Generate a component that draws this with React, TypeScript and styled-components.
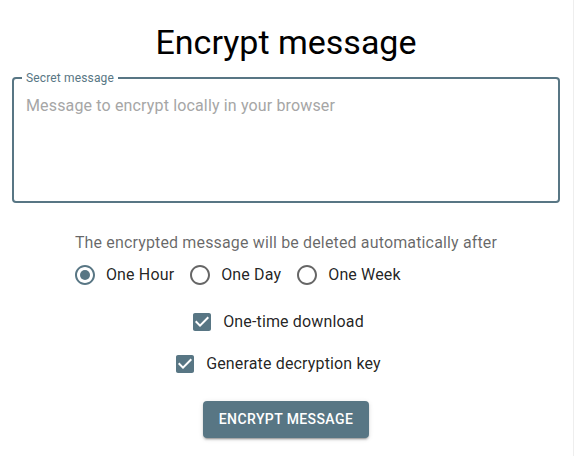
import React from "react";
import styled, { createGlobalStyle } from "styled-components";

const PRIMARY = "#587684";

const GlobalStyle = createGlobalStyle`
  html, body {
    margin: 0;
    padding: 0;
    background: #ffffff;
  }
  body {
    font-family: Roboto, "Liberation Sans", Arial, sans-serif;
    color: rgba(0, 0, 0, 0.87);
  }
  * { box-sizing: border-box; }
`;

const Page = styled.div`
  width: 574px;
  min-height: 456px;
  border-right: 1px solid #eeeeee;
  padding: 0 13px 0 12px;
`;

const Form = styled.form`
  display: flex;
  flex-direction: column;
  align-items: center;
`;

const Title = styled.h1`
  margin: 0;
  padding-top: 21px;
  font-family: Roboto, "Liberation Sans", Arial, sans-serif;
  font-size: 34px;
  font-weight: 400;
  line-height: 42px;
  color: #000000;
`;

const Outline = styled.fieldset`
  align-self: stretch;
  margin: 9px 0 0;
  padding: 0;
  min-inline-size: 0;
  border: 2px solid ${PRIMARY};
  border-radius: 4px;
  display: flex;
  flex-direction: column;
`;

const Legend = styled.legend`
  margin-left: 8px;
  padding: 0 4px;
  font-size: 12px;
  line-height: 12px;
  letter-spacing: 0.15px;
  color: ${PRIMARY};
`;

const TextArea = styled.textarea`
  display: block;
  width: 100%;
  border: none;
  outline: none;
  resize: none;
  background: transparent;
  padding: 9.5px 12px 10.5px;
  font-family: Roboto, "Liberation Sans", Arial, sans-serif;
  font-size: 16px;
  line-height: 23px;
  letter-spacing: 0.15px;
  height: 117px;
  color: rgba(0, 0, 0, 0.87);
  caret-color: #000;
  &::placeholder {
    color: #a6a6a6;
    opacity: 1;
  }
`;

const Control = styled.div`
  margin-top: 28px;
  display: inline-flex;
  flex-direction: column;
`;

const Helper = styled.div`
  font-size: 16px;
  line-height: 23px;
  letter-spacing: 0.15px;
  color: rgba(0, 0, 0, 0.6);
`;

const RadioRow = styled.div`
  display: flex;
  flex-direction: row;
`;

const ChoiceLabel = styled.label<{ $top?: number }>`
  display: inline-flex;
  align-items: center;
  margin: ${(p) => p.$top ?? 0}px 16px 0 -11px;
  cursor: pointer;
  font-size: 16px;
  line-height: 24px;
  letter-spacing: 0.15px;
  color: rgba(0, 0, 0, 0.87);
`;

const IconBox = styled.span<{ $on: boolean }>`
  display: inline-flex;
  padding: 9px;
  color: ${(p) => (p.$on ? PRIMARY : "rgba(0,0,0,0.6)")};
  svg { width: 24px; height: 24px; display: block; fill: currentColor; }
`;

const HiddenInput = styled.input`
  position: absolute;
  opacity: 0;
  width: 0;
  height: 0;
  margin: 0;
`;

const Button = styled.button`
  margin-top: 16px;
  border: none;
  border-radius: 4px;
  background: ${PRIMARY};
  color: #ffffff;
  padding: 6px 16px;
  font-family: Roboto, "Liberation Sans", Arial, sans-serif;
  font-size: 14px;
  font-weight: 500;
  line-height: 24.5px;
  letter-spacing: 0.4px;
  text-transform: uppercase;
  cursor: pointer;
  box-shadow: 0px 3px 1px -2px rgba(0, 0, 0, 0.2),
    0px 2px 2px 0px rgba(0, 0, 0, 0.14), 0px 1px 5px 0px rgba(0, 0, 0, 0.12);
`;

const RadioIcon = ({ on }: { on: boolean }) => (
  <svg viewBox="0 0 24 24">
    <path d="M12 2C6.48 2 2 6.48 2 12s4.48 10 10 10 10-4.48 10-10S17.52 2 12 2zm0 18c-4.42 0-8-3.58-8-8s3.58-8 8-8 8 3.58 8 8-3.58 8-8 8z" />
    {on && <circle cx="12" cy="12" r="5" />}
  </svg>
);

const CheckIcon = () => (
  <svg viewBox="0 0 24 24">
    <path d="M19 3H5c-1.11 0-2 .9-2 2v14c0 1.1.89 2 2 2h14c1.11 0 2-.9 2-2V5c0-1.1-.89-2-2-2zm-9 14l-5-5 1.41-1.41L10 14.17l7.59-7.59L19 8l-9 9z" />
  </svg>
);

const periods = ["One Hour", "One Day", "One Week"];

export default function App() {
  const [period, setPeriod] = React.useState("One Hour");
  const [oneTime, setOneTime] = React.useState(true);
  const [genKey, setGenKey] = React.useState(true);

  return (
    <>
      <GlobalStyle />
      <Page>
        <Form onSubmit={(e) => e.preventDefault()}>
          <Title>Encrypt message</Title>
          <Outline>
            <Legend>Secret message</Legend>
            <TextArea
              autoFocus
              rows={4}
              placeholder="Message to encrypt locally in your browser"
            />
          </Outline>
          <Control>
            <Helper>The encrypted message will be deleted automatically after</Helper>
            <RadioRow>
              {periods.map((p) => (
                <ChoiceLabel key={p}>
                  <HiddenInput
                    type="radio"
                    name="period"
                    checked={period === p}
                    onChange={() => setPeriod(p)}
                  />
                  <IconBox $on={period === p}>
                    <RadioIcon on={period === p} />
                  </IconBox>
                  {p}
                </ChoiceLabel>
              ))}
            </RadioRow>
          </Control>
          <ChoiceLabel $top={5}>
            <HiddenInput
              type="checkbox"
              checked={oneTime}
              onChange={() => setOneTime(!oneTime)}
            />
            <IconBox $on={oneTime}>
              <CheckIcon />
            </IconBox>
            One-time download
          </ChoiceLabel>
          <ChoiceLabel>
            <HiddenInput
              type="checkbox"
              checked={genKey}
              onChange={() => setGenKey(!genKey)}
            />
            <IconBox $on={genKey}>
              <CheckIcon />
            </IconBox>
            Generate decryption key
          </ChoiceLabel>
          <Button type="submit">Encrypt message</Button>
        </Form>
      </Page>
    </>
  );
}
